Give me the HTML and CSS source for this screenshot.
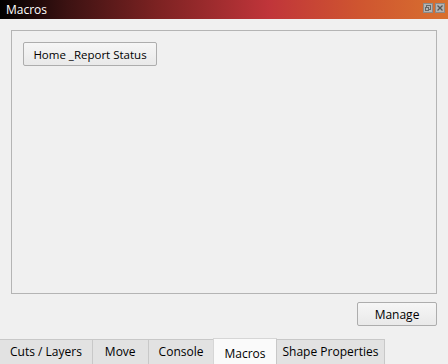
FILE: index.html
```html
<!DOCTYPE html>
<html lang="en">
<head>
    <meta charset="UTF-8">
    <title>Macros</title>
    <link rel="stylesheet" href="styles.css">
</head>
<body>
    <div id="dock">
        <div id="title-bar">
            <span class="title">Macros</span>
            <div class="title-icons">
                <svg width="10" height="10" viewBox="0 0 10 10">
                    <rect x="0.5" y="0.5" width="9" height="9" fill="#b4b4b4" stroke="#8a8a8a"/>
                    <rect x="3.5" y="2.5" width="4" height="4" fill="none" stroke="#666"/>
                    <rect x="2.5" y="4.5" width="3" height="3" fill="#b4b4b4" stroke="#666"/>
                </svg>
                <svg width="10" height="10" viewBox="0 0 10 10">
                    <rect x="0.5" y="0.5" width="9" height="9" fill="#b4b4b4" stroke="#8a8a8a"/>
                    <path d="M2.5 2.5 L7.5 7.5 M7.5 2.5 L2.5 7.5" stroke="#555" stroke-width="1.3"/>
                </svg>
            </div>
        </div>
        <div id="content">
            <div id="macro-frame">
                <button class="btn macro-btn">Home _Report Status</button>
            </div>
            <div id="manage-row">
                <button class="btn manage-btn">Manage</button>
            </div>
        </div>
        <div id="tab-bar">
            <div class="tab">Cuts / Layers</div>
            <div class="tab tab-move">Move</div>
            <div class="tab tab-console">Console</div>
            <div class="tab active">Macros</div>
            <div class="tab">Shape Properties</div>
        </div>
    </div>
</body>
</html>
```

FILE: styles.css
```css
body, html {
    margin: 0;
    padding: 0;
    height: 100%;
    background-color: #f0f0f0;
    font-family: "Open Sans", "Noto Sans", sans-serif;
    font-size: 12px;
    color: #000;
}
#dock {
    width: 448px;
    height: 364px;
    display: flex;
    flex-direction: column;
    overflow: hidden;
}
#title-bar {
    height: 19px;
    display: flex;
    align-items: center;
    justify-content: space-between;
    padding: 0 3px 0 6px;
    background: linear-gradient(90deg, #000000 0%, #3c1212 15%, #7c2222 35%, #c0353a 60%, #cf5530 80%, #d8702f 100%);
}
#title-bar .title {
    color: #fff;
    font-size: 12px;
}
.title-icons {
    display: flex;
    gap: 2px;
    align-self: flex-start;
    padding-top: 3px;
}
.title-icons svg {
    display: block;
}
#content {
    flex: 1;
    display: flex;
    flex-direction: column;
    padding: 11px 11px 0 11px;
}
#macro-frame {
    height: 264px;
    border: 1px solid #b4b4b4;
    box-sizing: border-box;
    padding: 11px 0 0 11px;
}
.btn {
    font-family: inherit;
    font-size: 12px;
    color: #000;
    height: 24px;
    border: 1px solid #adadad;
    border-radius: 2px;
    background: linear-gradient(#f6f6f6, #e9e9e9);
    padding: 0;
    box-sizing: border-box;
    white-space: nowrap;
}
.macro-btn {
    width: 134px;
    font-size: 11.5px;
}
#manage-row {
    display: flex;
    justify-content: flex-end;
    margin-top: 8px;
}
.manage-btn {
    width: 80px;
}
#tab-bar {
    display: flex;
    align-items: flex-end;
    height: 26px;
}
.tab {
    height: 25px;
    box-sizing: border-box;
    padding: 3px 10px 0;
    border: 1px solid #c8c8c8;
    border-bottom: none;
    margin-left: -1px;
    background-color: #e2e2e2;
    white-space: nowrap;
}
.tab:first-child {
    margin-left: 0;
    border-left: none;
    padding-left: 10px;
}
.tab-move {
    padding: 3px 12px 0;
}
.tab-console {
    padding: 3px 10px 0;
}
.tab:last-child {
    padding: 3px 6px 0;
}
.tab.active {
    height: 27px;
    padding-top: 6px;
    margin-bottom: -1px;
    background-color: #fafafa;
    border-color: #d6d6d6;
}
```
